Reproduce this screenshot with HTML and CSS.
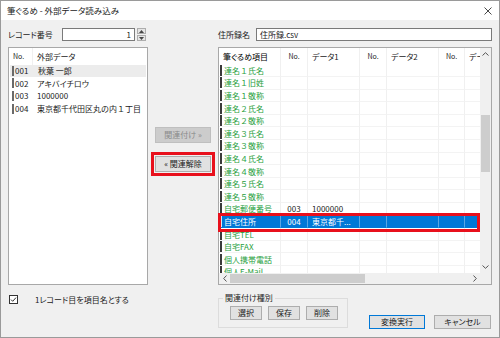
FILE: index.html
```html
<!DOCTYPE html>
<html lang="ja">
<head>
<meta charset="utf-8">
<title>筆ぐるめ - 外部データ読み込み</title>
<link rel="stylesheet" href="styles.css">
</head>
<body>
<div class="window">
  <div class="titlebar">
    <span class="title">筆ぐるめ - 外部データ読み込み</span>
    <svg class="close" width="8" height="8" viewBox="0 0 8 8"><path d="M0.5 0.5L7.5 7.5M7.5 0.5L0.5 7.5" stroke="#333" stroke-width="0.9" fill="none"/></svg>
  </div>
  <div class="content">
    <div class="top-left">
      <span class="lbl rec-lbl">レコード番号</span>
      <div class="spin-input">1</div>
      <div class="spin-btns">
        <div class="spin-btn"><svg width="5" height="3" viewBox="0 0 5 3"><path d="M0 3L2.5 0L5 3Z" fill="#444"/></svg></div>
        <div class="spin-btn"><svg width="5" height="3" viewBox="0 0 5 3"><path d="M0 0L2.5 3L5 0Z" fill="#444"/></svg></div>
      </div>
    </div>
    <div></div>
    <div class="top-right">
      <span class="lbl addr-lbl">住所録名</span>
      <div class="text-input">住所録.csv</div>
    </div>

    <div class="list">
      <div class="lrow lhead"><div class="lc">No.</div><div class="lc">外部データ</div></div>
      <div class="lrow hover"><div class="lc mark">001</div><div class="lc">秋葉 一郎</div></div>
      <div class="lrow"><div class="lc mark">002</div><div class="lc">アキバイチロウ</div></div>
      <div class="lrow"><div class="lc mark">003</div><div class="lc">1000000</div></div>
      <div class="lrow"><div class="lc mark">004</div><div class="lc wide">東京都千代田区丸の内１丁目</div></div>
    </div>

    <div class="mid">
      <button class="btn btn-mid disabled">関連付け »</button>
      <button class="btn btn-mid marked">« 関連解除</button>
    </div>

    <div class="grid">
      <div class="viewport">
        <div class="grow ghead">
          <div class="gc first">筆ぐるめ項目</div><div class="gc no">No.</div><div class="gc">データ1</div><div class="gc no">No.</div><div class="gc">データ2</div><div class="gc no">No.</div><div class="gc">データ3</div>
        </div>
        <div class="grow"><div class="gc item">連名１氏名</div><div class="gc"></div><div class="gc"></div><div class="gc"></div><div class="gc"></div><div class="gc"></div><div class="gc"></div></div>
        <div class="grow"><div class="gc item">連名１旧姓</div><div class="gc"></div><div class="gc"></div><div class="gc"></div><div class="gc"></div><div class="gc"></div><div class="gc"></div></div>
        <div class="grow"><div class="gc item">連名１敬称</div><div class="gc"></div><div class="gc"></div><div class="gc"></div><div class="gc"></div><div class="gc"></div><div class="gc"></div></div>
        <div class="grow"><div class="gc item">連名２氏名</div><div class="gc"></div><div class="gc"></div><div class="gc"></div><div class="gc"></div><div class="gc"></div><div class="gc"></div></div>
        <div class="grow"><div class="gc item">連名２敬称</div><div class="gc"></div><div class="gc"></div><div class="gc"></div><div class="gc"></div><div class="gc"></div><div class="gc"></div></div>
        <div class="grow"><div class="gc item">連名３氏名</div><div class="gc"></div><div class="gc"></div><div class="gc"></div><div class="gc"></div><div class="gc"></div><div class="gc"></div></div>
        <div class="grow"><div class="gc item">連名３敬称</div><div class="gc"></div><div class="gc"></div><div class="gc"></div><div class="gc"></div><div class="gc"></div><div class="gc"></div></div>
        <div class="grow"><div class="gc item">連名４氏名</div><div class="gc"></div><div class="gc"></div><div class="gc"></div><div class="gc"></div><div class="gc"></div><div class="gc"></div></div>
        <div class="grow"><div class="gc item">連名４敬称</div><div class="gc"></div><div class="gc"></div><div class="gc"></div><div class="gc"></div><div class="gc"></div><div class="gc"></div></div>
        <div class="grow"><div class="gc item">連名５氏名</div><div class="gc"></div><div class="gc"></div><div class="gc"></div><div class="gc"></div><div class="gc"></div><div class="gc"></div></div>
        <div class="grow"><div class="gc item">連名５敬称</div><div class="gc"></div><div class="gc"></div><div class="gc"></div><div class="gc"></div><div class="gc"></div><div class="gc"></div></div>
        <div class="grow"><div class="gc item">自宅郵便番号</div><div class="gc no plain">003</div><div class="gc plain">1000000</div><div class="gc"></div><div class="gc"></div><div class="gc"></div><div class="gc"></div></div>
        <div class="grow selected"><div class="gc item">自宅住所</div><div class="gc no">004</div><div class="gc">東京都千...</div><div class="gc"></div><div class="gc"></div><div class="gc"></div><div class="gc"></div></div>
        <div class="grow"><div class="gc item">自宅TEL</div><div class="gc"></div><div class="gc"></div><div class="gc"></div><div class="gc"></div><div class="gc"></div><div class="gc"></div></div>
        <div class="grow"><div class="gc item">自宅FAX</div><div class="gc"></div><div class="gc"></div><div class="gc"></div><div class="gc"></div><div class="gc"></div><div class="gc"></div></div>
        <div class="grow"><div class="gc item">個人携帯電話</div><div class="gc"></div><div class="gc"></div><div class="gc"></div><div class="gc"></div><div class="gc"></div><div class="gc"></div></div>
        <div class="grow"><div class="gc item">個人E-Mail</div><div class="gc"></div><div class="gc"></div><div class="gc"></div><div class="gc"></div><div class="gc"></div><div class="gc"></div></div>
      </div>
      <div class="vscroll">
        <div class="sarrow"><svg width="7" height="4" viewBox="0 0 7 4"><path d="M0.5 3.5L3.5 0.7L6.5 3.5" stroke="#555" stroke-width="1" fill="none"/></svg></div>
        <div class="vtrack"><div class="vthumb"></div></div>
        <div class="sarrow"><svg width="7" height="4" viewBox="0 0 7 4"><path d="M0.5 0.5L3.5 3.3L6.5 0.5" stroke="#555" stroke-width="1" fill="none"/></svg></div>
      </div>
      <div class="hscroll">
        <div class="sarrow"><svg width="4" height="7" viewBox="0 0 4 7"><path d="M3.5 0.5L0.7 3.5L3.5 6.5" stroke="#555" stroke-width="1" fill="none"/></svg></div>
        <div class="hthumb"></div>
        <div class="htrack"></div>
        <div class="sarrow"><svg width="4" height="7" viewBox="0 0 4 7"><path d="M0.5 0.5L3.3 3.5L0.5 6.5" stroke="#555" stroke-width="1" fill="none"/></svg></div>
      </div>
      <div class="corner"></div>
      <div class="redbox"></div>
    </div>

    <div class="bottom-left">
      <span class="check"><svg width="9" height="9" viewBox="0 0 9 9"><rect x="0.5" y="0.5" width="8" height="8" fill="#fff" stroke="#333"/><path d="M2 4.6L3.7 6.3L7 2.6" stroke="#333" stroke-width="1" fill="none"/></svg></span>
      <span class="check-lbl">1レコード目を項目名とする</span>
    </div>
    <div></div>
    <div class="bottom-right">
      <fieldset class="group">
        <legend>関連付け種別</legend>
        <div class="group-btns">
          <button class="btn btn-sm">選択</button>
          <button class="btn btn-sm">保存</button>
          <button class="btn btn-sm">削除</button>
        </div>
      </fieldset>
      <button class="btn btn-main default">変換実行</button>
      <button class="btn btn-main">キャンセル</button>
    </div>
  </div>
</div>
</body>
</html>
```

FILE: styles.css
```css
* { box-sizing: border-box; }
html, body { margin: 0; padding: 0; }
body {
  width: 500px;
  height: 338px;
  overflow: hidden;
  font-family: "Noto Sans CJK JP", "Noto Sans", sans-serif;
  font-size: 8px;
  line-height: 11px;
  color: #1a1a1a;
  font-feature-settings: "palt";
}
.window {
  width: 500px;
  height: 338px;
  border: 1px solid #9a9a9a;
  background: #f0f0f0;
  display: flex;
  flex-direction: column;
}
.titlebar {
  height: 19px;
  flex: none;
  background: #fff;
  display: flex;
  align-items: center;
  justify-content: space-between;
  padding: 0 7px 0 6px;
}
.title { font-size: 8.5px; color: #222; }
.close { display: block; }

.content {
  flex: 1;
  display: grid;
  grid-template-columns: 140px 70px 274px;
  grid-template-rows: 13px 238px 1fr;
  row-gap: 6px;
  padding: 8px 7px 0 7px;
}

/* top row */
.top-left, .top-right { display: flex; align-items: center; }
.lbl { color: #222; white-space: nowrap; }
.rec-lbl { width: 54px; flex: none; }
.spin-input {
  width: 73px;
  height: 13px;
  background: #fff;
  border: 1px solid #7a7a7a;
  text-align: right;
  padding-right: 3px;
  line-height: 11px;
}
.spin-btns {
  margin-left: 2px;
  width: 9px;
  height: 13px;
  display: flex;
  flex-direction: column;
  gap: 1px;
}
.spin-btn {
  flex: 1;
  background: #e5e5e5;
  border: 1px solid #adadad;
  display: flex;
  align-items: center;
  justify-content: center;
}
.spin-btn svg { display: block; }
.addr-lbl { width: 38px; flex: none; }
.text-input {
  flex: 1;
  height: 13px;
  background: #fff;
  border: 1px solid #7a7a7a;
  padding-left: 3px;
  line-height: 11px;
}

/* left list */
.list {
  background: #fff;
  border: 1px solid #a8a8a8;
  display: flex;
  flex-direction: column;
}
.lrow {
  display: grid;
  grid-template-columns: 24px 1fr;
  height: 12.6px;
  align-items: center;
  white-space: nowrap;
}
.lhead { height: 16.5px; }
.lhead .lc:first-child { padding-left: 4px; border-right: 1px solid #f0f0f0; height: 100%; display: flex; align-items: center; font-size: 7px; }
.lc { padding-left: 4px; overflow: hidden; }
.lc.wide { font-feature-settings: normal; }
.lc.mark { padding-left: 3px; display: flex; align-items: center; }
.lc.mark::before {
  content: "";
  display: inline-block;
  width: 2px;
  height: 10px;
  background: #6a6a6a;
  margin-right: 1px;
}
.lrow.hover { background: #ececec; margin: 0 1px; }
.lrow.hover .lc.mark { padding-left: 2px; }

/* middle buttons */
.mid {
  display: flex;
  flex-direction: column;
  align-items: center;
  padding-top: 80px;
  gap: 13px;
}
.btn {
  font-family: inherit;
  font-size: 8px;
  line-height: 10px;
  background: #e1e1e1;
  border: 1px solid #adadad;
  color: #1a1a1a;
  padding: 0;
  margin: 0;
  font-feature-settings: "palt";
}
.btn-mid { width: 56px; height: 16px; }
.disabled { background: #cccccc; border-color: #bfbfbf; color: #8a8a8a; }
.marked { outline: 3px solid #e8101c; outline-offset: 1px; }

/* right grid */
.grid {
  position: relative;
  background: #fff;
  border: 1px solid #a8a8a8;
  display: grid;
  grid-template-columns: 1fr 11px;
  grid-template-rows: 1fr 11px;
}
.viewport { overflow: hidden; }
.grow {
  display: grid;
  grid-template-columns: 62px 27px 52px 27px 52px 26px 60px;
  width: 306px;
  height: 12.6px;
}
.ghead { height: 16.5px; }
.gc {
  border-right: 1px solid #f0f0f0;
  border-bottom: 1px solid #f3f3f3;
  white-space: nowrap;
  overflow: hidden;
  padding-left: 4px;
  display: flex;
  align-items: center;
}
.ghead .gc { border-bottom: none; color: #222; }
.ghead .gc.first { color: #000; }
.ghead .gc.no { font-size: 7px; justify-content: center; padding-left: 0; }
.gc.no { justify-content: center; padding-left: 0; }
.gc.item { color: #27a040; padding-left: 1px; font-feature-settings: normal; }
.gc.item::before {
  content: "";
  display: inline-block;
  width: 2px;
  height: 11px;
  background: #3a3a3a;
  margin-right: 2px;
  flex: none;
}
.gc.plain { color: #1a1a1a; }
.grow.selected { background: #0078d7; }
.grow.selected .gc { color: #fff; border-right-color: rgba(255,255,255,0.35); border-bottom-color: #0078d7; }
.grow.selected .gc.item::before { background: #d8e8f8; }

.vscroll {
  background: #f0f0f0;
  display: flex;
  flex-direction: column;
}
.sarrow {
  flex: none;
  width: 11px;
  height: 12px;
  display: flex;
  align-items: center;
  justify-content: center;
}
.sarrow svg { display: block; }
.vtrack { flex: 1; }
.vthumb { margin: 55px 1px 0 1px; height: 57px; background: #cdcdcd; }
.hscroll {
  background: #f0f0f0;
  display: flex;
}
.hscroll .sarrow { height: 11px; }
.hthumb { width: 135px; margin: 1px 0; background: #cdcdcd; }
.htrack { flex: 1; }
.corner { background: #f0f0f0; }
.redbox {
  position: absolute;
  left: -1px;
  top: 164.5px;
  width: 262px;
  height: 19px;
  border: 3px solid #e8101c;
}

/* bottom */
.bottom-left {
  display: flex;
  align-items: center;
  height: 11px;
  margin-top: 3px;
  padding-left: 1px;
}
.check svg { display: block; }
.check-lbl { margin-left: 17px; color: #222; }
.bottom-right { display: flex; align-items: flex-start; }
.group {
  margin: 1px 0 0 0;
  width: 130px;
  height: 36px;
  border: 1px solid #dcdcdc;
  padding: 2px 0 0 4px;
  min-width: 0;
}
.group legend {
  padding: 0 2px;
  margin-left: 0;
  line-height: 12px;
  color: #222;
}
.group-btns { display: flex; gap: 6px; margin-left: 7px; }
.btn-sm { width: 32px; height: 14px; }
.btn-main { width: 56px; height: 14px; margin-top: 24px; }
.btn-main.default { margin-left: 21px; border-color: #0078d7; }
.btn-main + .btn-main { margin-left: 9px; width: 57px; }
```
